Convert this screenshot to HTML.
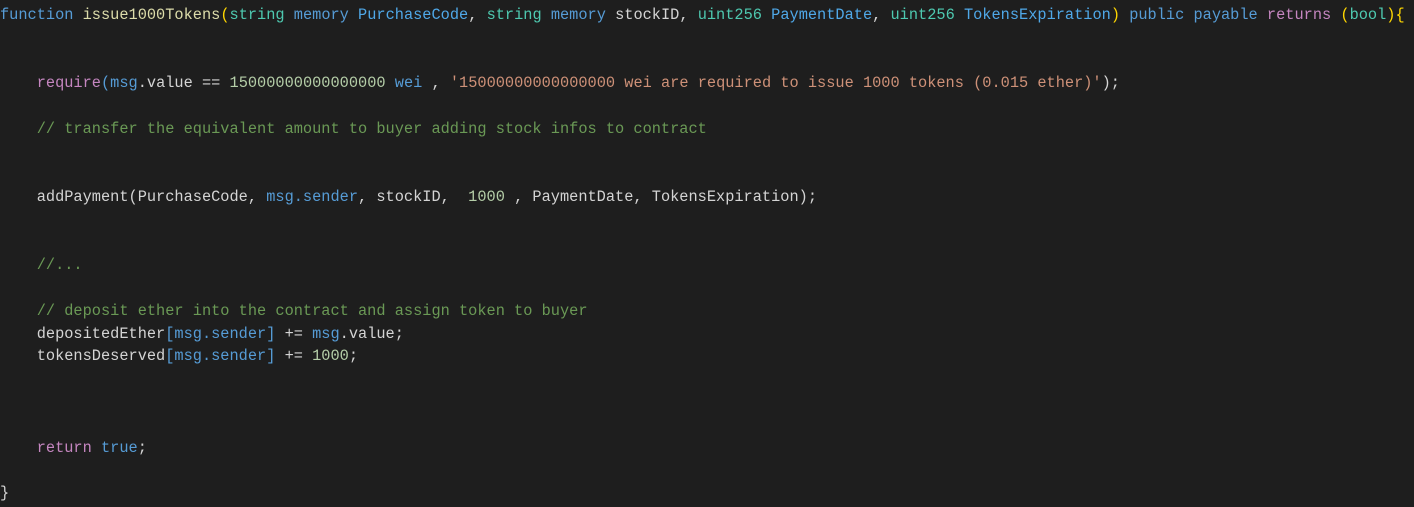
<!DOCTYPE html>
<html><head><meta charset="utf-8"><style>
html,body{margin:0;padding:0;background:#1e1e1e;width:1414px;height:507px;overflow:hidden}
pre{margin:0;padding:0;position:absolute;left:0;top:4px;font-family:"Liberation Mono",monospace;font-size:15.3px;line-height:22.76px;color:#d4d4d4;white-space:pre}
.k{color:#569cd6}.f{color:#dcdcaa}.t{color:#4ec9b0}.c{color:#6a9955}.s{color:#ce9178}.n{color:#b5cea8}.p{color:#c586c0}.b{color:#ffd700}.v{color:#4fa8e8}
</style></head><body><pre><span class="k">function</span> <span class="f">issue1000Tokens</span><span class="b">(</span><span class="t">string</span> <span class="k">memory</span> <span class="v">PurchaseCode</span>, <span class="t">string</span> <span class="k">memory</span> stockID, <span class="t">uint256</span> <span class="v">PaymentDate</span>, <span class="t">uint256</span> <span class="v">TokensExpiration</span><span class="b">)</span> <span class="k">public</span> <span class="k">payable</span> <span class="p">returns</span> <span class="b">(</span><span class="t">bool</span><span class="b">){</span>


    <span class="p">require</span><span class="k">(</span><span class="k">msg</span>.value == <span class="n">15000000000000000</span> <span class="k">wei</span> , <span class="s">'15000000000000000 wei are required to issue 1000 tokens (0.015 ether)'</span>);

    <span class="c">// transfer the equivalent amount to buyer adding stock infos to contract</span>


    addPayment(PurchaseCode, <span class="k">msg.sender</span>, stockID,  <span class="n">1000</span> , PaymentDate, TokensExpiration);


    <span class="c">//...</span>

    <span class="c">// deposit ether into the contract and assign token to buyer</span>
    depositedEther<span class="k">[msg.sender]</span> += <span class="k">msg</span>.value;
    tokensDeserved<span class="k">[msg.sender]</span> += <span class="n">1000</span>;



    <span class="p">return</span> <span class="k">true</span>;

}</pre></body></html>
